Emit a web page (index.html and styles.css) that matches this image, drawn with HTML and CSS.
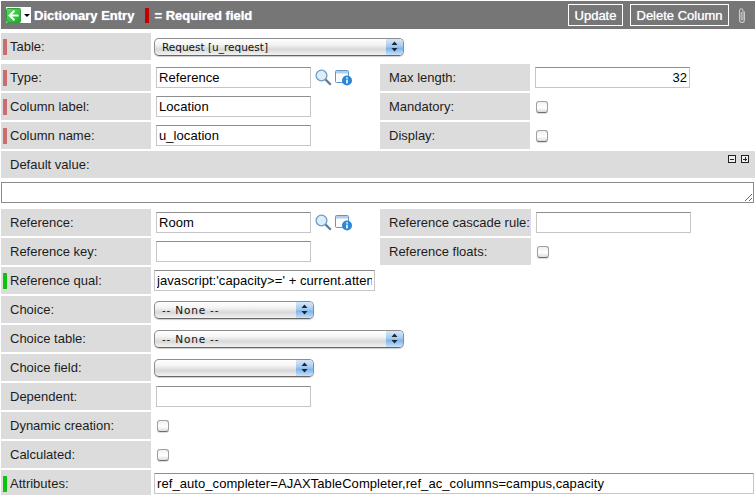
FILE: index.html
```html
<!DOCTYPE html>
<html lang="en">
<head>
    <meta charset="UTF-8">
    <title>Dictionary Entry</title>
    <link rel="stylesheet" href="styles.css">
</head>

<body>

    <header class="title-bar">
        <div class="back-menu">
            <svg class="back-icon" width="15" height="15" viewBox="0 0 15 15">
                <defs>
                    <linearGradient id="greenFill" x1="0" y1="0" x2="1" y2="1">
                        <stop offset="0" stop-color="#63dc63"/>
                        <stop offset="1" stop-color="#18ac2a"/>
                    </linearGradient>
                </defs>
                <rect x="0.5" y="0.5" width="14" height="14" rx="1" fill="url(#greenFill)" stroke="#2aa238"/>
                <path d="M8.5 2.8 L3.6 7.5 L8.5 12.2 M4 7.5 H12.5" fill="none" stroke="#fff" stroke-width="2"/>
            </svg>
            <span class="back-caret"></span>
        </div>
        <span class="title-text">Dictionary Entry</span>
        <span class="required-key"></span>
        <span class="title-text">= Required field</span>
        <div class="title-actions">
            <button class="title-btn btn-update">Update</button>
            <button class="title-btn btn-delete">Delete Column</button>
            <svg class="clip-icon" width="10" height="17" viewBox="0 0 10 17">
                <path d="M7.5 4.5 V12.5 A2.5 3 0 0 1 2.5 12.5 V3.5 A1.8 2.2 0 0 1 6 3.5 V11.5 A0.8 1 0 0 1 4.2 11.5 V5" fill="none" stroke="#c9c9c9" stroke-width="1.1"/>
            </svg>
        </div>
    </header>

    <main>
        <div class="form-grid table-row">
            <div class="label"><span class="mark mark-req"></span>Table:</div>
            <div class="field field-wide field-tight">
                <div class="aqua-select aqua-long">
                    <span class="aqua-text">Request [u_request]</span>
                    <span class="aqua-arrows"><svg width="7" height="11" viewBox="0 0 7 11"><path d="M3.5 0.5 L6.5 4 H0.5 Z M0.5 7 H6.5 L3.5 10.5 Z" fill="#1b2735"/></svg></span>
                </div>
            </div>
        </div>

        <div class="form-grid">
            <div class="label"><span class="mark mark-req"></span>Type:</div>
            <div class="field">
                <input class="text-input" type="text" value="Reference">
                <svg class="lookup-icon" width="17" height="17" viewBox="0 0 17 17">
                    <circle cx="6.5" cy="6.5" r="5.4" fill="#dcedfb" stroke="#6d9dc4" stroke-width="1.3"/>
                    <path d="M10.6 10.6 L15.8 15.8" stroke="#5a7d9e" stroke-width="2.2"/>
                </svg>
                <svg class="info-icon" width="18" height="16" viewBox="0 0 18 16">
                    <rect x="0.5" y="0.5" width="13" height="12" rx="1" fill="#fafcfe" stroke="#5f94cc"/>
                    <rect x="1" y="1" width="12" height="2.5" fill="#b4cce6"/>
                    <circle cx="12" cy="10.5" r="5" fill="#2a86d6"/>
                    <rect x="11.2" y="9.6" width="1.6" height="3.8" fill="#fff"/>
                    <rect x="11.2" y="7.2" width="1.6" height="1.5" fill="#fff"/>
                </svg>
            </div>
            <div class="label">Max length:</div>
            <div class="field"><input class="text-input num-input" type="text" value="32"></div>

            <div class="label"><span class="mark mark-req"></span>Column label:</div>
            <div class="field"><input class="text-input" type="text" value="Location"></div>
            <div class="label">Mandatory:</div>
            <div class="field"><input class="check" type="checkbox"></div>

            <div class="label"><span class="mark mark-req"></span>Column name:</div>
            <div class="field"><input class="text-input" type="text" value="u_location"></div>
            <div class="label">Display:</div>
            <div class="field"><input class="check" type="checkbox"></div>
        </div>

        <div class="default-head">
            <div class="default-label"><span class="mark"></span>Default value:</div>
            <span class="size-btn size-minus"></span>
            <span class="size-btn size-plus"></span>
        </div>
        <textarea class="default-area"></textarea>

        <div class="form-grid ref-grid">
            <div class="label"><span class="mark"></span>Reference:</div>
            <div class="field">
                <input class="text-input" type="text" value="Room">
                <svg class="lookup-icon" width="17" height="17" viewBox="0 0 17 17">
                    <circle cx="6.5" cy="6.5" r="5.4" fill="#dcedfb" stroke="#6d9dc4" stroke-width="1.3"/>
                    <path d="M10.6 10.6 L15.8 15.8" stroke="#5a7d9e" stroke-width="2.2"/>
                </svg>
                <svg class="info-icon" width="18" height="16" viewBox="0 0 18 16">
                    <rect x="0.5" y="0.5" width="13" height="12" rx="1" fill="#fafcfe" stroke="#5f94cc"/>
                    <rect x="1" y="1" width="12" height="2.5" fill="#b4cce6"/>
                    <circle cx="12" cy="10.5" r="5" fill="#2a86d6"/>
                    <rect x="11.2" y="9.6" width="1.6" height="3.8" fill="#fff"/>
                    <rect x="11.2" y="7.2" width="1.6" height="1.5" fill="#fff"/>
                </svg>
            </div>
            <div class="label">Reference cascade rule:</div>
            <div class="field"><input class="text-input" type="text"></div>

            <div class="label"><span class="mark"></span>Reference key:</div>
            <div class="field"><input class="text-input" type="text"></div>
            <div class="label">Reference floats:</div>
            <div class="field"><input class="check" type="checkbox"></div>

            <div class="label label-left"><span class="mark mark-ok"></span>Reference qual:</div>
            <div class="field field-tight"><input class="text-input qual-input" type="text" value="javascript:'capacity>=' + current.attendees"></div>

            <div class="label label-left"><span class="mark"></span>Choice:</div>
            <div class="field field-tight">
                <div class="aqua-select">
                    <span class="aqua-text aqua-none">-- None --</span>
                    <span class="aqua-arrows"><svg width="7" height="11" viewBox="0 0 7 11"><path d="M3.5 0.5 L6.5 4 H0.5 Z M0.5 7 H6.5 L3.5 10.5 Z" fill="#1b2735"/></svg></span>
                </div>
            </div>

            <div class="label label-left"><span class="mark"></span>Choice table:</div>
            <div class="field field-wide field-tight">
                <div class="aqua-select aqua-long">
                    <span class="aqua-text aqua-none">-- None --</span>
                    <span class="aqua-arrows"><svg width="7" height="11" viewBox="0 0 7 11"><path d="M3.5 0.5 L6.5 4 H0.5 Z M0.5 7 H6.5 L3.5 10.5 Z" fill="#1b2735"/></svg></span>
                </div>
            </div>

            <div class="label label-left"><span class="mark"></span>Choice field:</div>
            <div class="field field-tight">
                <div class="aqua-select">
                    <span class="aqua-text"></span>
                    <span class="aqua-arrows"><svg width="7" height="11" viewBox="0 0 7 11"><path d="M3.5 0.5 L6.5 4 H0.5 Z M0.5 7 H6.5 L3.5 10.5 Z" fill="#1b2735"/></svg></span>
                </div>
            </div>

            <div class="label label-left"><span class="mark"></span>Dependent:</div>
            <div class="field"><input class="text-input" type="text"></div>

            <div class="label label-left"><span class="mark"></span>Dynamic creation:</div>
            <div class="field"><input class="check" type="checkbox"></div>

            <div class="label label-left"><span class="mark"></span>Calculated:</div>
            <div class="field"><input class="check" type="checkbox"></div>

            <div class="label label-left"><span class="mark mark-ok"></span>Attributes:</div>
            <div class="field field-wide field-tight"><input class="text-input attr-input" type="text" value="ref_auto_completer=AJAXTableCompleter,ref_ac_columns=campus,capacity"></div>
        </div>
    </main>

</body>
</html>
```

FILE: styles.css
```css
* {
    margin: 0;
    padding: 0;
    box-sizing: border-box;
}

body {
    width: 755px;
    height: 495px;
    overflow: hidden;
    padding: 1px 0 0 1px;
    background-color: #fff;
    font-family: "Liberation Sans", Arial, sans-serif;
    font-size: 13px;
    color: #1c1c1c;
}

/* title bar */
.title-bar {
    display: flex;
    align-items: center;
    height: 28px;
    padding-left: 5px;
    background-color: #767676;
    color: #fff;
}

.back-menu {
    display: flex;
    align-items: center;
    width: 25px;
    height: 16px;
    margin-right: 3px;
    background-color: #fff;
}

.back-icon {
    display: block;
}

.back-caret {
    margin-left: 3px;
    border-top: 3px solid #000;
    border-left: 3px solid transparent;
    border-right: 3px solid transparent;
}

.title-text {
    font-weight: bold;
    font-size: 13px;
    text-shadow: 0 0 1px #dfe6f5;
}

.required-key {
    width: 4px;
    height: 15px;
    margin: 0 5px 0 11px;
    background-color: #c40000;
}

.title-actions {
    display: flex;
    align-items: center;
    margin-left: auto;
    padding-right: 8px;
}

.title-btn {
    height: 22px;
    border: 1px solid #fff;
    background-color: transparent;
    color: #fff;
    font-family: inherit;
    font-size: 13px;
    text-shadow: 0 0 1px #dfe6f5;
}

.btn-update {
    width: 55px;
    margin-right: 7px;
}

.btn-delete {
    width: 99px;
    margin-right: 8px;
}

.clip-icon {
    display: block;
}

/* form rows */
.form-grid {
    display: grid;
    grid-template-columns: 150px 229px 150px 1fr;
    grid-auto-rows: 27px;
    row-gap: 2px;
}

.table-row {
    margin: 4px 0;
}

.ref-grid {
    grid-template-columns: 150px 229px 151px 1fr;
    margin-top: 6px;
}

.label {
    display: flex;
    align-items: center;
    background-color: #dcdcdc;
    padding-left: 9px;
}

.label-left {
    grid-column: 1;
}

.mark {
    width: 4px;
    height: 16px;
    margin: 0 3px 0 -7px;
}

.mark-req {
    background-color: #c96e6e;
}

.mark-ok {
    background-color: #0dc40d;
}

.field {
    display: flex;
    align-items: center;
    padding-left: 5px;
}

.field-tight {
    padding-left: 3px;
}

.field-wide {
    grid-column: 2 / -1;
}

.text-input {
    width: 155px;
    height: 21px;
    padding: 0 2px;
    border: 1px solid #c6c6c6;
    border-top-color: #8e8e8e;
    background-color: #fff;
    font-family: inherit;
    font-size: 13px;
    letter-spacing: 0.07px;
    color: #000;
}

.num-input {
    text-align: right;
}

.qual-input {
    width: 221px;
}

.attr-input {
    width: 600px;
}

.lookup-icon {
    margin-left: 4px;
}

.info-icon {
    margin-left: 3px;
}

.check {
    appearance: none;
    width: 12px;
    height: 12px;
    margin-left: 1px;
    border: 1px solid #a0a0a0;
    border-bottom-color: #6f6f6f;
    border-radius: 3px;
    background: linear-gradient(#efefef, #ffffff 55%, #dcdcdc);
    box-shadow: 0 1px 1px rgba(0, 0, 0, 0.15);
}

/* aqua style select */
.aqua-select {
    display: flex;
    width: 160px;
    height: 18px;
    border: 1px solid #8d8d8d;
    border-bottom-color: #666;
    border-radius: 5px;
    overflow: hidden;
    background: linear-gradient(#ffffff, #f4f4f4 35%, #d8d8d8 65%, #f2f2f2);
    box-shadow: 0 1px 1px rgba(0, 0, 0, 0.2);
    font-family: "DejaVu Sans", sans-serif;
    font-size: 10.5px;
    color: #111;
}

.aqua-long {
    width: 250px;
}

.aqua-text {
    flex: 1;
    padding-left: 7px;
    line-height: 16px;
}

.aqua-none {
    letter-spacing: 0.8px;
}

.aqua-arrows {
    display: flex;
    align-items: center;
    justify-content: center;
    width: 17px;
    background: linear-gradient(#d6e8f9, #a5cbf0 45%, #7fb5ea 60%, #c8e2fa);
}

/* default value */
.default-head {
    display: flex;
    height: 27px;
    margin-top: 2px;
    padding: 4px 6px 0 9px;
    background-color: #dcdcdc;
}

.default-label {
    display: flex;
    align-items: center;
    flex: 1;
    height: 19px;
}

.size-btn {
    width: 8px;
    height: 8px;
    margin-left: 5px;
    border: 1px solid #222;
    background: linear-gradient(#222, #222) center / 4px 1px no-repeat, #eee;
}

.size-plus {
    background: linear-gradient(#222, #222) center / 4px 1px no-repeat, linear-gradient(#222, #222) center / 1px 4px no-repeat, #eee;
}

.default-area {
    display: block;
    width: 753px;
    height: 21px;
    margin-top: 4px;
    border: 1px solid #8a8a8a;
    background-color: #fff;
    font-family: inherit;
    font-size: 13px;
}
```
